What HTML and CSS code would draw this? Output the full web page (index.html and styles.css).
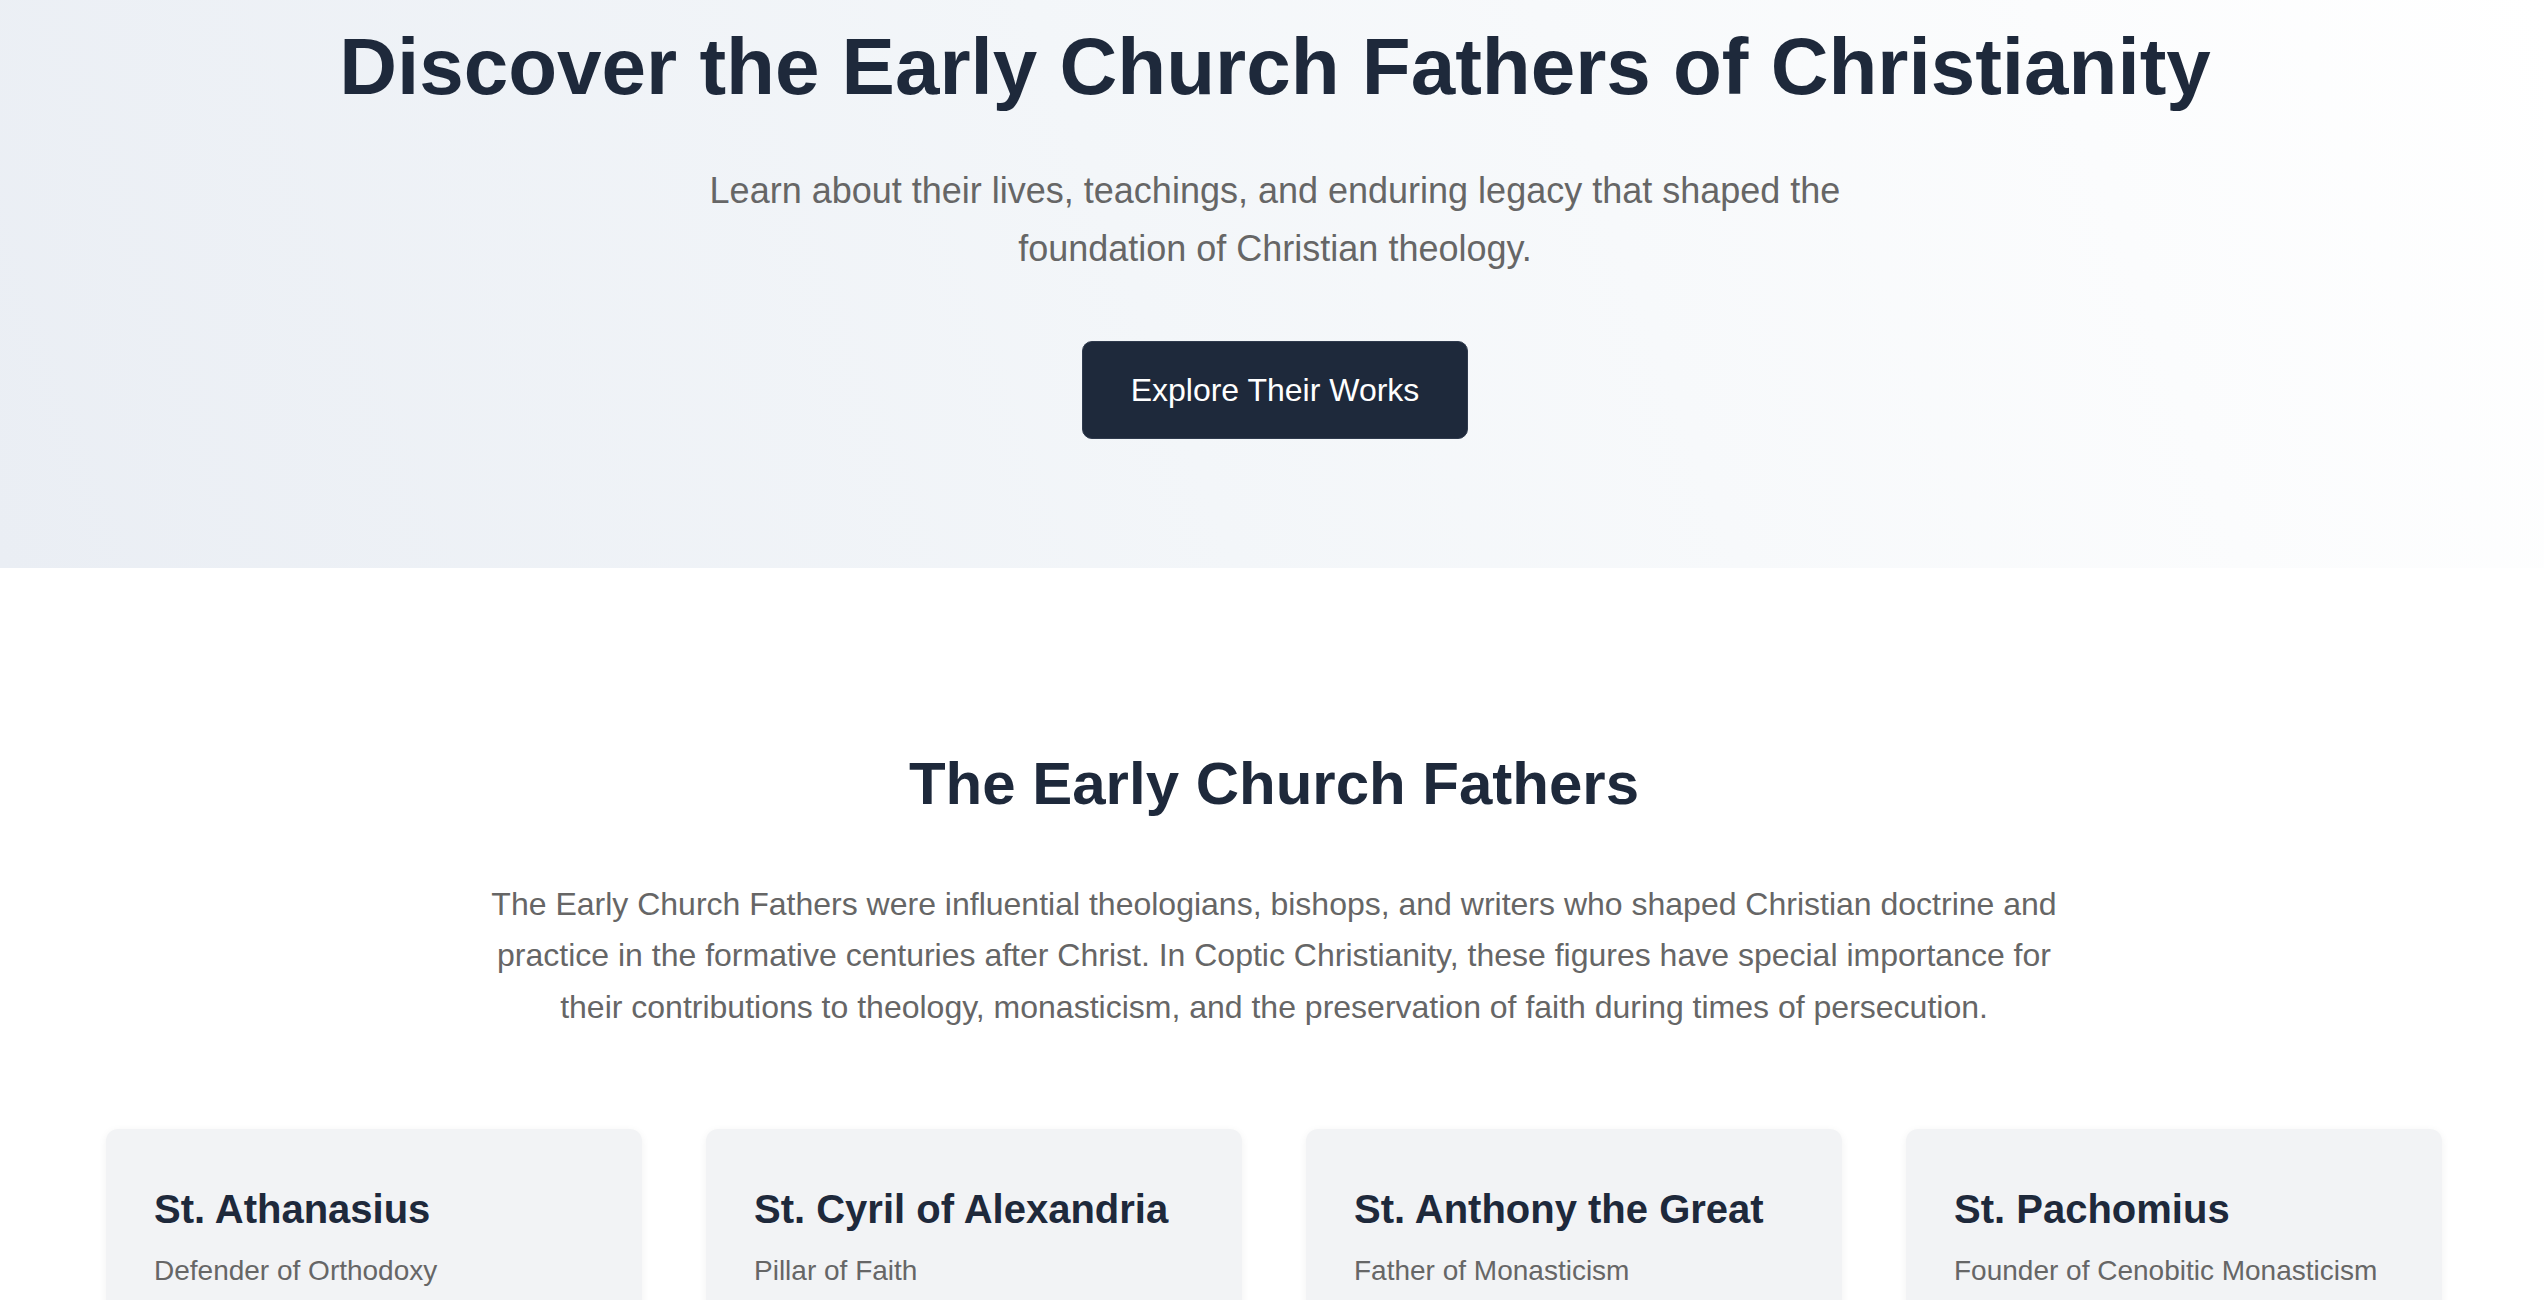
FILE: index.html
```html
<!DOCTYPE html>
<html lang="en">
<head>
<meta charset="utf-8">
<title>Early Church Fathers</title>
<link rel="stylesheet" href="styles.css">
</head>
<body>
<header class="hero">
  <h1 class="hero-title">Discover the Early Church Fathers of Christianity</h1>
  <p class="hero-subtitle">Learn about their lives, teachings, and enduring legacy that shaped the foundation of Christian theology.</p>
  <a class="hero-button" href="#fathers">Explore Their Works</a>
</header>

<main class="fathers" id="fathers">
  <h2 class="section-title">The Early Church Fathers</h2>
  <p class="section-intro">The Early Church Fathers were influential theologians, bishops, and writers who shaped Christian doctrine and practice in the formative centuries after Christ. In Coptic Christianity, these figures have special importance for their contributions to theology, monasticism, and the preservation of faith during times of persecution.</p>

  <div class="card-grid">
    <article class="card">
      <h3 class="card-title">St. Athanasius</h3>
      <p class="card-role">Defender of Orthodoxy</p>
      <p class="card-text">Bishop of Alexandria who stood firm against Arianism and defended the divinity of Christ.</p>
    </article>
    <article class="card">
      <h3 class="card-title">St. Cyril of Alexandria</h3>
      <p class="card-role">Pillar of Faith</p>
      <p class="card-text">Patriarch of Alexandria who articulated the unity of Christ's divine and human natures.</p>
    </article>
    <article class="card">
      <h3 class="card-title">St. Anthony the Great</h3>
      <p class="card-role">Father of Monasticism</p>
      <p class="card-text">Desert hermit whose life of prayer and asceticism inspired generations of monks.</p>
    </article>
    <article class="card">
      <h3 class="card-title">St. Pachomius</h3>
      <p class="card-role">Founder of Cenobitic Monasticism</p>
      <p class="card-text">Established the first communal monasteries with a shared rule of life.</p>
    </article>
  </div>
</main>
</body>
</html>
```

FILE: styles.css
```css
* {
  box-sizing: border-box;
}

body {
  margin: 0;
  font-family: "Liberation Sans", Arial, Helvetica, sans-serif;
  line-height: 1.6;
  color: #1e293b;
  background: #ffffff;
}

.hero {
  display: flex;
  flex-direction: column;
  align-items: center;
  text-align: center;
  padding: 19px 37px 129px 43px;
  background: linear-gradient(70deg, #eaeef4 0%, #f3f6f9 45%, #ffffff 100%);
}

.hero-title {
  margin: 0 0 47px;
  font-size: 80px;
  line-height: 1.2;
  font-weight: 700;
  color: #1e293b;
}

.hero-subtitle {
  margin: 0 0 64px;
  max-width: 1200px;
  font-size: 36px;
  line-height: 1.6;
  color: #666666;
}

.hero-button {
  display: inline-block;
  padding: 24px 48px;
  border: 1px solid #2f3a4d;
  border-radius: 10px;
  background: #1e293b;
  color: #ffffff;
  font-size: 32px;
  line-height: 1.5;
  text-decoration: none;
}

.fathers {
  display: flex;
  flex-direction: column;
  align-items: center;
  padding: 180px 102px 96px 106px;
}

.section-title {
  margin: 0 0 59px;
  font-size: 60px;
  line-height: 1.2;
  font-weight: 700;
  color: #1e293b;
  text-align: center;
}

.section-intro {
  margin: 0 0 96px;
  max-width: 1600px;
  font-size: 32px;
  line-height: 1.6;
  color: #666666;
  text-align: center;
}

.card-grid {
  display: grid;
  grid-template-columns: repeat(4, 1fr);
  gap: 64px;
  width: 100%;
}

.card {
  padding: 48px;
  border-radius: 12px;
  background: #f2f3f5;
  box-shadow: 0 2px 8px rgba(0, 0, 0, 0.06);
}

.card-title {
  margin: 0 0 8px;
  font-size: 40px;
  line-height: 1.6;
  font-weight: 700;
  color: #1e293b;
}

.card-role {
  margin: 0 0 24px;
  font-size: 28px;
  line-height: 1.6;
  color: #666666;
}

.card-text {
  margin: 0;
  font-size: 28px;
  line-height: 1.6;
  color: #444444;
}
```
